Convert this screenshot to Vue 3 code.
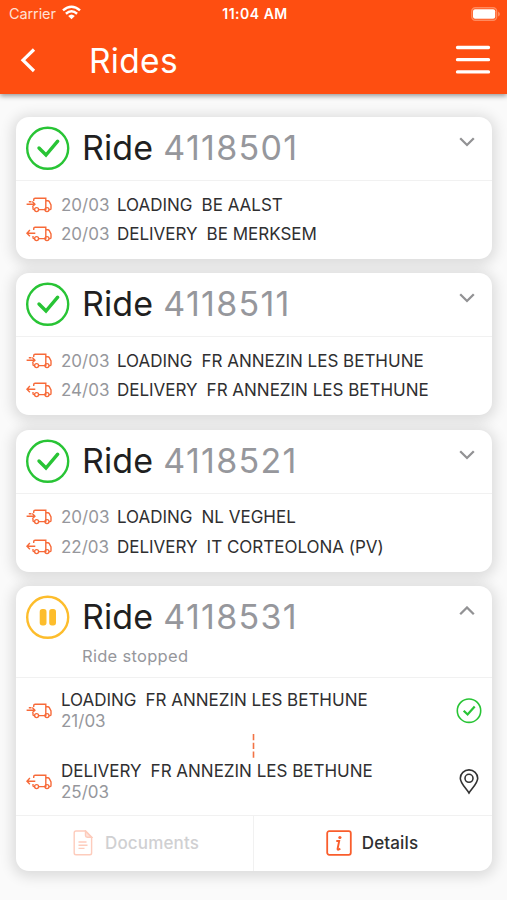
<script setup>
const rides = [
  { id: '4118501', stops: [['out', '20/03', 'LOADING', 'BE AALST'], ['in', '20/03', 'DELIVERY', 'BE MERKSEM']] },
  { id: '4118511', stops: [['out', '20/03', 'LOADING', 'FR ANNEZIN LES BETHUNE'], ['in', '24/03', 'DELIVERY', 'FR ANNEZIN LES BETHUNE']] },
  { id: '4118521', stops: [['out', '20/03', 'LOADING', 'NL VEGHEL'], ['in', '22/03', 'DELIVERY', 'IT CORTEOLONA (PV)']] },
]
const truckBody = 'M7.700 5V3.700Q7.700 2.300 9.100 2.300H19.800V13.600H12.600M19.800 4.800H21.800Q22.800 4.800 23.300 5.700L25 9V12.400Q25 13.600 23.800 13.600H23.100M8.600 13.600H8.200Q7 13.600 7 12.400V11M12.600 13.600H18.900'
const arrows = {
  out: 'M.6 8.200H8.800M6.300 5.600L8.900 8.200L6.300 10.800M2.800 5.800H5.500',
  in: 'M9.300 8.200H1M3.900 5L.9 8.200L3.900 11.300',
}
const openStops = [
  { kind: 'out', type: 'LOADING', date: '21/03', done: true },
  { kind: 'in', type: 'DELIVERY', date: '25/03', done: false },
]
</script>

<template>
  <div class="screen">
    <header class="header">
      <div class="status">
        <div class="carrier">
          <span>Carrier</span>
          <svg width="19" height="15" viewBox="0 0 19 15" fill="none" stroke="#fff" stroke-width="2.500">
            <path d="M1 5.400Q9.500-2 18 5.400M3.900 8.700Q9.500 3.900 15.100 8.700" />
            <path d="M6.200 11Q9.500 8 12.800 11L9.500 14.300Z" fill="#fff" stroke="none" />
          </svg>
        </div>
        <b>11:04 AM</b>
        <svg class="battery" width="30" height="14" viewBox="0 0 30 14">
          <rect x=".8" y=".8" width="24.800" height="12.400" rx="3.500" fill="none" stroke="#ff8a5e" stroke-width="1.400" />
          <rect x="2" y="2.300" width="22.200" height="9.400" rx="2" fill="#fff" />
          <path d="M27 4.500Q29 5.500 29 7T27 9.500Z" fill="#ff8a5e" />
        </svg>
      </div>
      <div class="nav">
        <svg class="back" width="18" height="28" viewBox="0 0 18 28" fill="none" stroke="#fff" stroke-width="3.200"><path d="M16 3.500L5 14.200L16 25" /></svg>
        <h1>Rides</h1>
        <svg class="menu" width="36" height="30" viewBox="0 0 36 30" stroke="#fff" stroke-width="3.300" stroke-linecap="round"><path d="M2.500 2.500H33.500M2.500 14.700H33.500M2.500 26.900H33.500" /></svg>
      </div>
    </header>

    <main class="list">
      <section v-for="ride in rides" :key="ride.id" class="card">
        <div class="head">
          <svg class="state" width="44" height="44" viewBox="0 0 44 44" fill="none" stroke="#28c435"><circle cx="21.700" cy="22.300" r="20.500" stroke-width="2.400" /><path d="M13 22L20 29L31.700 15.200" stroke-width="3.400" stroke-linecap="round" /></svg>
          <h2>Ride <span>{{ ride.id }}</span></h2>
          <svg class="chevron" width="16" height="10" viewBox="0 0 16 10" fill="none" stroke="#929294" stroke-width="2.300"><path d="M1.200 1.300L8 8L14.800 1.300" /></svg>
        </div>
        <div class="stops">
          <div v-for="s in ride.stops" :key="s[2]" class="stop">
            <svg class="truck" width="26" height="18" viewBox="0 0 26 18" fill="none" stroke="#f76a39" stroke-width="1.400"><path :d="truckBody" /><path :d="arrows[s[0]]" /><circle cx="10.600" cy="13.600" r="2" /><circle cx="21" cy="13.600" r="2" /></svg>
            <span class="date">{{ s[1] }}</span>
            <span class="kind">{{ s[2] }}</span>
            <span>{{ s[3] }}</span>
          </div>
        </div>
      </section>

      <section class="card open">
        <div class="head">
          <svg class="state" width="44" height="44" viewBox="0 0 44 44"><circle cx="21.700" cy="22.300" r="20.500" fill="none" stroke="#fdbd2c" stroke-width="2.400" /><rect x="13.700" y="14.100" width="6.800" height="16.400" rx="2.700" fill="#fdbd2c" /><rect x="23.200" y="14.100" width="6.800" height="16.400" rx="2.700" fill="#fdbd2c" /></svg>
          <h2>Ride <span>4118531</span></h2>
          <svg class="chevron" width="16" height="10" viewBox="0 0 16 10" fill="none" stroke="#929294" stroke-width="2.300"><path d="M1.200 8.200L8 1.500L14.800 8.200" /></svg>
        </div>
        <p class="note">Ride stopped</p>
        <div class="route">
          <template v-for="s in openStops" :key="s.kind">
            <div class="leg">
              <svg class="truck" width="26" height="18" viewBox="0 0 26 18" fill="none" stroke="#f76a39" stroke-width="1.400"><path :d="truckBody" /><path :d="arrows[s.kind]" /><circle cx="10.600" cy="13.600" r="2" /><circle cx="21" cy="13.600" r="2" /></svg>
              <div class="info">
                <div class="place"><span class="kind">{{ s.type }}</span><span>FR ANNEZIN LES BETHUNE</span></div>
                <div class="date">{{ s.date }}</div>
              </div>
              <svg v-if="s.done" class="mark" width="26" height="26" viewBox="0 0 26 26" fill="none" stroke="#28c435"><circle cx="13" cy="12.700" r="11.700" stroke-width="1.600" /><path d="M7.700 12.700L11.600 16.500L18.700 8.400" stroke-width="2.200" /></svg>
              <svg v-else class="mark" width="26" height="26" viewBox="0 0 26 26" fill="none" stroke="#333" stroke-width="1.600"><path d="M13 24C10.500 19.700 4.300 14.500 4.300 9.300A8.700 8.400 0 0 1 21.700 9.300C21.700 14.500 15.500 19.700 13 24Z" /><circle cx="13" cy="9.300" r="4" /></svg>
            </div>
            <svg v-if="s.done" class="dash" width="3" height="24" viewBox="0 0 3 24"><path d="M1.500 0V24" stroke="#f27345" stroke-width="1.600" stroke-dasharray="6.300 2.400" /></svg>
          </template>
        </div>
        <div class="actions">
          <div class="action disabled">
            <svg width="20" height="26" viewBox="0 0 20 26" fill="none" stroke="#fb5926" stroke-width="1.400"><path d="M12.500 1H3Q1.200 1 1.200 2.800V23Q1.200 24.800 3 24.800H16.800Q18.600 24.800 18.600 23V7.200Z" /><path d="M12.500 1V5.500Q12.500 7.200 14.200 7.200H18.600Z" fill="#fb5926" fill-opacity=".5" /><path d="M5.500 12H13.500M5.500 15.200H14.500M5.500 18.400H11.500" /></svg>
            <span>Documents</span>
          </div>
          <div class="action details">
            <svg width="26" height="26" viewBox="0 0 26 26" fill="none" stroke="#f95d2c"><rect x="1.200" y="1.200" width="23.600" height="23.600" rx="2" stroke-width="1.800" /><path d="M10.300 11H13.200L11.600 18.700Q11.400 20 12.500 19.700L14.300 18.600" stroke-width="1.900" /><circle cx="13.900" cy="7.500" r="1.600" fill="#f95d2c" stroke="none" /></svg>
            <span>Details</span>
          </div>
        </div>
      </section>
    </main>
  </div>
</template>

<style>
body { margin: 0; background: #fafafa; }
</style>

<style scoped>
.screen { width: 507px; height: 900px; overflow: hidden; background: #fafafa; font-family: Inter, "Liberation Sans", sans-serif; color: #2f2f31; }
svg { display: block; flex: none; }
.header { position: relative; z-index: 1; box-sizing: border-box; height: 94px; background: #fe4e11; color: #fff; box-shadow: 0 2px 5px rgba(0, 0, 0, .4); }
.status { display: grid; grid-template-columns: 1fr auto 1fr; align-items: center; height: 28px; padding: 0 6px 0 9px; font-size: 14.500px; }
.status b { font-weight: 600; font-size: 14px; letter-spacing: .5px; margin-top: -1px; }
.carrier { display: flex; align-items: center; gap: 6px; margin-top: -1px; color: #ffe0d4; letter-spacing: -.1px; }
.carrier svg { margin-top: -2px; }
.battery { justify-self: end; margin-top: -1px; }
.nav { display: flex; align-items: center; height: 64px; padding: 0 16px 0 18px; }
h1 { flex: 1; margin: 2px 0 0 53px; font-size: 33.500px; line-height: 44px; font-weight: 400; letter-spacing: .3px; }
.back { margin-top: -1px; }
.list { display: flex; flex-direction: column; gap: 14.300px; padding: 23px 15px 29px 16px; }
.card { height: 142px; border-radius: 13px; background: #fff; box-shadow: 0 2px 13px 4px rgba(0, 0, 0, .12); }
.head { box-sizing: border-box; display: flex; height: 64px; padding: 9px 17px 0 10px; border-bottom: 1.500px solid #f1f1f1; }
h2 { flex: 1; margin: 0 0 0 12px; font-size: 34px; line-height: 43px; font-weight: 400; letter-spacing: .1px; color: #1f1f21; white-space: nowrap; }
h2 span { margin-left: .5px; color: #96979c; letter-spacing: 1.300px; }
.chevron { margin-top: 11px; }
.stops { padding: 9px 0 0 10px; }
.stop { display: flex; align-items: center; height: 29.400px; font-size: 17px; letter-spacing: -.01px; white-space: nowrap; }
.date { color: #96979c; }
.stop .date { width: 56px; margin-left: 9px; }
.kind { margin-right: 9px; }
.open { height: 285px; }
.open .head { border: 0; height: 57px; }
.note { box-sizing: border-box; height: 35px; margin: 0; padding-left: 66px; border-bottom: 1.500px solid #f1f1f1; font-size: 16.500px; line-height: 27px; letter-spacing: .3px; color: #96979c; }
.route { box-sizing: border-box; height: 137px; padding: 12px 10px 0; }
.leg { display: flex; align-items: center; height: 42px; }
.info { flex: 1; margin-left: 9px; font-size: 17px; line-height: 21px; letter-spacing: -.01px; }
.dash { margin: 2px 0 3px 226px; }
.actions { box-sizing: border-box; display: grid; grid-template-columns: 237px 1fr; height: 56px; border-top: 1.500px solid #f1f1f1; }
.action { display: flex; align-items: center; justify-content: center; gap: 10px; font-size: 17px; font-weight: 500; }
.action + .action { border-left: 1.500px solid #f1f1f1; }
.details { padding-right: 2px; letter-spacing: .15px; }
.disabled svg { opacity: .3; }
.disabled { gap: 12px; padding-left: 3px; letter-spacing: .15px; }
.disabled span { color: #d0d0d2; }
</style>
